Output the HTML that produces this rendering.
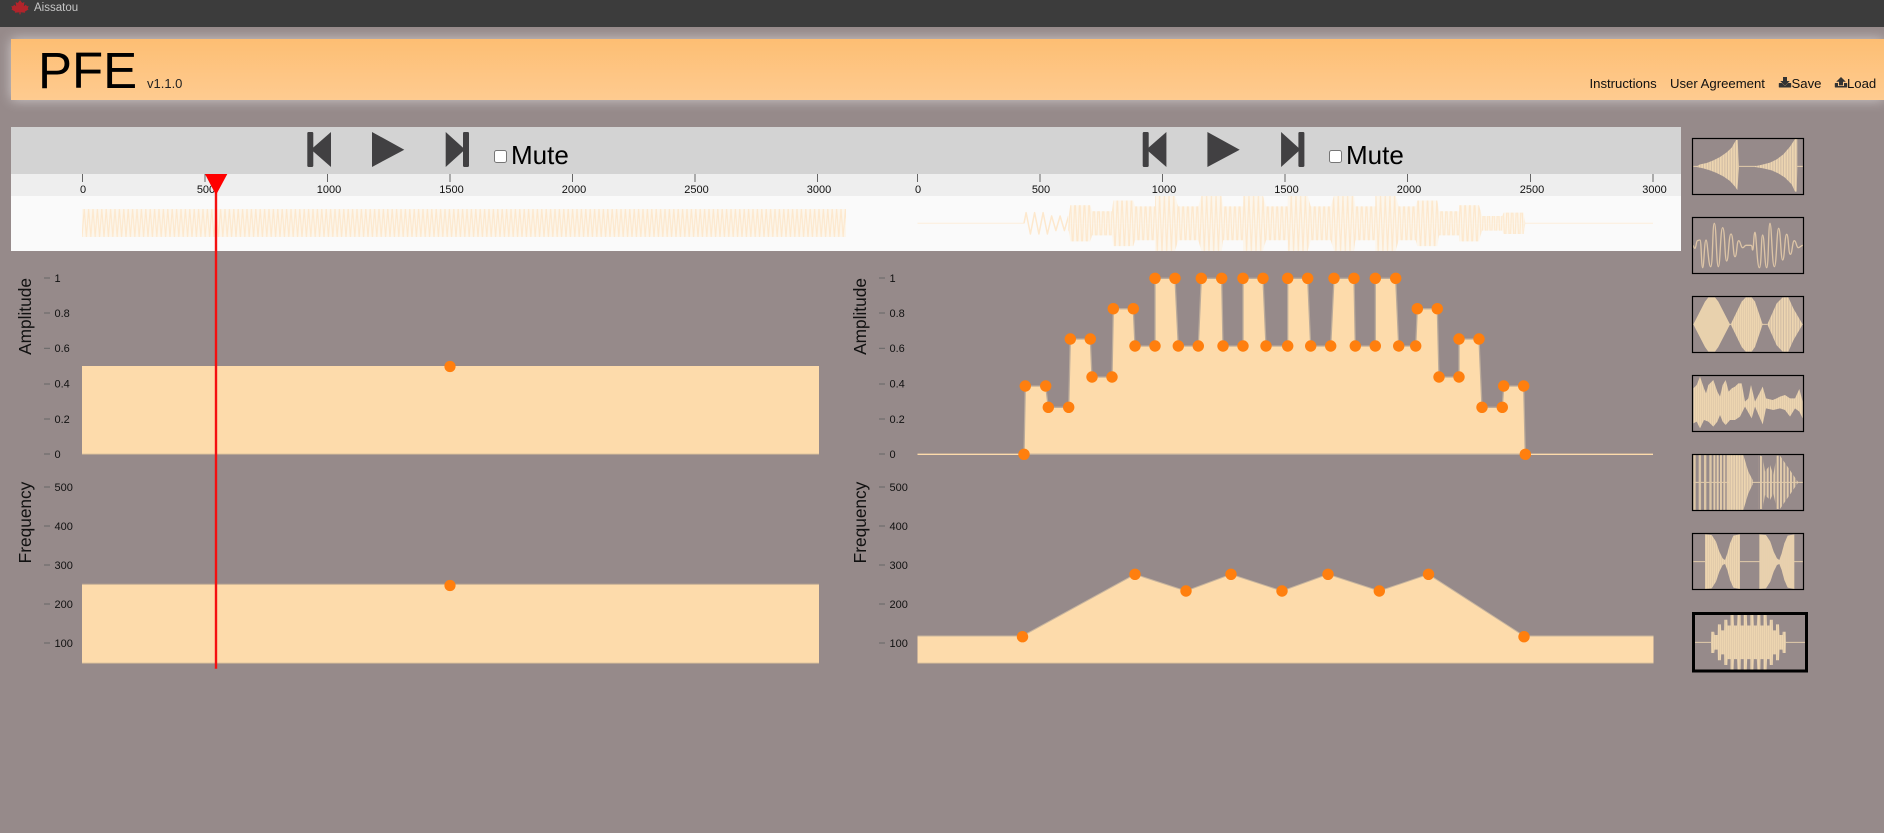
<!DOCTYPE html>
<html lang="en">
<head>
<meta charset="utf-8">
<title>PFE</title>
<style>
html,body{margin:0;padding:0;width:1884px;height:833px;overflow:hidden;background:#968a8a;font-family:"Liberation Sans",Arial,sans-serif;}
#top{position:absolute;left:0;top:0;width:1884px;height:27px;background:#3c3c3c;z-index:3;}
#hdr{position:absolute;left:11px;top:39px;width:1873px;height:61px;background:linear-gradient(#fdbe73,#fecb90);box-shadow:0 0 12px rgba(255,255,255,.55);z-index:1;}
svg.main{position:absolute;left:0;top:0;z-index:4;}
input.cb{position:absolute;margin:0;width:13px;height:13px;top:150px;z-index:5;}
text{font-family:"Liberation Sans",Arial,sans-serif;}
.ax{font-size:11px;fill:#111;}
.ti{stroke:#666;stroke-width:1;}
.yl{font-size:17.3px;fill:#111;text-anchor:middle;}
.nav{font-size:13.15px;fill:#111;}
.wl{stroke:#e2cbaa;stroke-width:3;fill:none;}
</style>
</head>
<body>
<div id="top"></div>
<div id="hdr"></div>
<input class="cb" type="checkbox" style="left:494px">
<input class="cb" type="checkbox" style="left:1329px">
<svg class="main" width="1884" height="833" viewBox="0 0 1884 833" xmlns="http://www.w3.org/2000/svg">
<defs>
<polygon id="ampS" points="1024,454.3 1025.3,386 1045.7,386 1048.3,407.3 1068.7,407.3 1070.3,339 1090.3,339 1092,377 1112,377 1113.3,308.7 1133.3,308.7 1135,346 1155,346 1155,278.3 1175,278.3 1178.3,346 1198.3,346 1201.3,278.3 1221.7,278.3 1223,346 1243,346 1243,278.3 1263,278.3 1266,346 1287.7,346 1287.7,278.3 1307.7,278.3 1310.7,346 1330.7,346 1334,278.3 1354,278.3 1355.3,346 1375.3,346 1375.3,278.3 1395.7,278.3 1398.7,346 1415.7,346 1417.3,308.7 1437.3,308.7 1439,377 1459,377 1459,339 1479,339 1482,407.3 1502.3,407.3 1503.7,386 1523.7,386 1525.3,454.3"/>
<clipPath id="envR">
<use href="#ampS" transform="matrix(1 0 0 .15625 0 152.3)"/>
<use href="#ampS" transform="matrix(1 0 0 -.15625 0 294.3)"/>
</clipPath>
<clipPath id="envT7">
<use href="#ampS" transform="matrix(.4484 0 0 .466 -366.2 620.3)"/>
<use href="#ampS" transform="matrix(.4484 0 0 -.466 -366.2 1043.7)"/>
</clipPath>
<pattern id="wL" patternUnits="userSpaceOnUse" x="82" y="209" width="4.4" height="28"><path d="M0 28L2.2 0L4.4 28" fill="none" stroke="#fde8cd" stroke-width="1.2"/></pattern>
<pattern id="wR2" patternUnits="userSpaceOnUse" x="1068" y="196" width="4.7" height="55"><path d="M0 55L2.35 0L4.7 55" fill="none" stroke="#fde8cd" stroke-width="1.2"/></pattern>
<pattern id="pA" patternUnits="userSpaceOnUse" width="8" height="10"><rect width="8" height="10" fill="#cfbba4"/><rect width="5" height="10" fill="#edd5b0"/></pattern>
<pattern id="pD" patternUnits="userSpaceOnUse" width="6" height="10"><rect width="6" height="10" fill="#dcc6a8"/><rect width="4" height="10" fill="#edd5b0"/></pattern>
<pattern id="pB" patternUnits="userSpaceOnUse" width="10" height="10"><rect width="6" height="10" fill="#e2cbaa"/></pattern>
<pattern id="pC" patternUnits="userSpaceOnUse" x="40" width="16" height="10"><rect width="7" height="10" fill="#dcc6a6"/></pattern>
</defs>

<!-- top bar -->
<path d="M20 0L22.2 3L24.4 2L23.8 6.2L26 4.6L26.8 6.3L28.6 6L27.8 8.6L28.6 9.4L24.8 11.6L25.2 12.8L20.6 12.2V14.4H19.4V12.2L14.8 12.8L15.2 11.6L11.4 9.4L12.2 8.6L11.4 6L13.2 6.3L14 4.6L16.2 6.2L15.6 2L17.8 3Z" fill="#b1242b"/>
<text x="34" y="11" font-size="11.5" fill="#c6c6c6">Aissatou</text>

<!-- header -->
<text x="38" y="88" font-size="51" fill="#000">PFE</text>
<text x="147" y="88" font-size="13" fill="#222">v1.1.0</text>
<text class="nav" x="1589.5" y="88">Instructions</text>
<text class="nav" x="1670" y="88">User Agreement</text>
<text class="nav" x="1791.5" y="88">Save</text>
<text class="nav" x="1847" y="88">Load</text>
<g fill="#333">
<path d="M1783 77h4v4h2.8l-4.8 4.8l-4.8-4.8h2.8z"/>
<path d="M1779.4 83h2.6l3 3l3-3h2.6q.6 0 .6 .6v3.4q0 .5-.6 .5h-11.2q-.6 0-.6-.5v-3.4q0-.6 .6-.6z"/>
<path d="M1841 77l4.8 4.8h-2.8v3.6h-4v-3.6h-2.8z"/>
<path d="M1835.4 83h2.6v3h6v-3h2.6q.6 0 .6 .6v3.4q0 .5-.6 .5h-11.2q-.6 0-.6-.5v-3.4q0-.6 .6-.6z"/>
</g>

<!-- control band -->
<rect x="11" y="127" width="1670" height="47" fill="#d3d3d3"/>
<rect x="11" y="174" width="1670" height="22" fill="#eeeeee"/>
<rect x="11" y="196" width="1670" height="55" fill="#fafafa"/>

<g fill="#414042">
<rect x="307.3" y="132" width="6" height="35" rx="1.2"/>
<polygon points="311,149.5 331,132 331,167"/>
<polygon points="372,132 404.3,149.7 372,167"/>
<polygon points="445.7,132 465,149.5 445.7,167"/>
<rect x="463" y="132" width="6" height="35" rx="1.2"/>
</g>
<g fill="#414042" transform="translate(835.4 0)">
<rect x="307.3" y="132" width="6" height="35" rx="1.2"/>
<polygon points="311,149.5 331,132 331,167"/>
<polygon points="372,132 404.3,149.7 372,167"/>
<polygon points="445.7,132 465,149.5 445.7,167"/>
<rect x="463" y="132" width="6" height="35" rx="1.2"/>
</g>
<text x="511" y="164" font-size="26" fill="#000">Mute</text>
<text x="1346" y="164" font-size="26" fill="#000">Mute</text>

<!-- time axes -->
<g class="ti">
<line x1="82.5" x2="82.5" y1="174" y2="182"/><line x1="205" x2="205" y1="174" y2="182"/><line x1="327.5" x2="327.5" y1="174" y2="182"/><line x1="450" x2="450" y1="174" y2="182"/><line x1="572.5" x2="572.5" y1="174" y2="182"/><line x1="695" x2="695" y1="174" y2="182"/><line x1="817.5" x2="817.5" y1="174" y2="182"/>
<line x1="917.5" x2="917.5" y1="174" y2="182"/><line x1="1040" x2="1040" y1="174" y2="182"/><line x1="1162.5" x2="1162.5" y1="174" y2="182"/><line x1="1285" x2="1285" y1="174" y2="182"/><line x1="1407.5" x2="1407.5" y1="174" y2="182"/><line x1="1530.5" x2="1530.5" y1="174" y2="182"/><line x1="1653" x2="1653" y1="174" y2="182"/>
</g>
<g class="ax" text-anchor="middle">
<text x="83" y="193">0</text><text x="206" y="193">500</text><text x="329" y="193">1000</text><text x="451.5" y="193">1500</text><text x="574" y="193">2000</text><text x="696.5" y="193">2500</text><text x="819" y="193">3000</text>
<text x="918" y="193">0</text><text x="1041" y="193">500</text><text x="1164" y="193">1000</text><text x="1286.5" y="193">1500</text><text x="1409" y="193">2000</text><text x="1532" y="193">2500</text><text x="1654.5" y="193">3000</text>
</g>

<!-- waveforms in band -->
<rect x="82" y="209" width="764" height="28" fill="#fcf6ec"/>
<rect x="82" y="209" width="764" height="28" fill="url(#wL)"/>
<line x1="917.5" x2="1024" y1="223.3" y2="223.3" stroke="#fdeedb" stroke-width="1"/>
<line x1="1525" x2="1653" y1="223.3" y2="223.3" stroke="#fdeedb" stroke-width="1"/>
<polyline points="1024,223.3 1026.1,212.6 1030.4,234 1034.6,212.6 1038.9,234 1043.1,212.6 1047.4,234 1051.6,216 1055.9,230.6 1060.1,216 1064.4,230.6 1068.6,216" fill="none" stroke="#fde8cd" stroke-width="1.5" stroke-linejoin="round"/>
<g clip-path="url(#envR)">
<rect x="1068" y="196" width="458" height="55" fill="#fcf6ec"/>
<rect x="1068" y="196" width="458" height="55" fill="url(#wR2)"/>
</g>

<!-- y axes -->
<g class="ti">
<line x1="44" x2="50" y1="278" y2="278"/><line x1="44" x2="50" y1="313" y2="313"/><line x1="44" x2="50" y1="348.3" y2="348.3"/><line x1="44" x2="50" y1="384" y2="384"/><line x1="44" x2="50" y1="419" y2="419"/><line x1="44" x2="50" y1="454" y2="454"/>
<line x1="44" x2="50" y1="487" y2="487"/><line x1="44" x2="50" y1="526" y2="526"/><line x1="44" x2="50" y1="565" y2="565"/><line x1="44" x2="50" y1="604" y2="604"/><line x1="44" x2="50" y1="643" y2="643"/>
<line x1="879" x2="885" y1="278" y2="278"/><line x1="879" x2="885" y1="313" y2="313"/><line x1="879" x2="885" y1="348.3" y2="348.3"/><line x1="879" x2="885" y1="384" y2="384"/><line x1="879" x2="885" y1="419" y2="419"/><line x1="879" x2="885" y1="454" y2="454"/>
<line x1="879" x2="885" y1="487" y2="487"/><line x1="879" x2="885" y1="526" y2="526"/><line x1="879" x2="885" y1="565" y2="565"/><line x1="879" x2="885" y1="604" y2="604"/><line x1="879" x2="885" y1="643" y2="643"/>
</g>
<g class="ax">
<text x="54.5" y="282">1</text><text x="54.5" y="317">0.8</text><text x="54.5" y="352">0.6</text><text x="54.5" y="387.5">0.4</text><text x="54.5" y="423">0.2</text><text x="54.5" y="458">0</text>
<text x="54.5" y="491">500</text><text x="54.5" y="530">400</text><text x="54.5" y="569">300</text><text x="54.5" y="608">200</text><text x="54.5" y="647">100</text>
<text x="889.5" y="282">1</text><text x="889.5" y="317">0.8</text><text x="889.5" y="352">0.6</text><text x="889.5" y="387.5">0.4</text><text x="889.5" y="423">0.2</text><text x="889.5" y="458">0</text>
<text x="889.5" y="491">500</text><text x="889.5" y="530">400</text><text x="889.5" y="569">300</text><text x="889.5" y="608">200</text><text x="889.5" y="647">100</text>
</g>
<text class="yl" transform="translate(31 316.5) rotate(-90)">Amplitude</text>
<text class="yl" transform="translate(31 522.5) rotate(-90)">Frequency</text>
<text class="yl" transform="translate(866 316.5) rotate(-90)">Amplitude</text>
<text class="yl" transform="translate(866 522.5) rotate(-90)">Frequency</text>

<!-- left charts -->
<rect x="82" y="366" width="737" height="88.3" fill="#fddbab"/>
<line x1="82" x2="819" y1="454.3" y2="454.3" stroke="#c3ae94" stroke-width="1"/>
<circle cx="450" cy="366.5" r="5.6" fill="#ff7f0e"/>
<rect x="82" y="584.3" width="737" height="79" fill="#fddbab"/>
<line x1="82" x2="819" y1="584.3" y2="584.3" stroke="#c3ae94" stroke-width="1"/>
<line x1="82" x2="819" y1="663.3" y2="663.3" stroke="#c3ae94" stroke-width="1"/>
<circle cx="450" cy="585.5" r="5.6" fill="#ff7f0e"/>

<!-- right amplitude -->
<line x1="917.5" x2="1024" y1="454.3" y2="454.3" stroke="#fddbab" stroke-width="1.4"/>
<line x1="1525" x2="1653" y1="454.3" y2="454.3" stroke="#fddbab" stroke-width="1.4"/>
<use href="#ampS" fill="#fddbab" stroke="#bbab9a" stroke-width="1.3"/>
<g fill="#ff7f0e">
<circle cx="1024" cy="454.3" r="5.7"/><circle cx="1025.3" cy="386" r="5.7"/><circle cx="1045.7" cy="386" r="5.7"/><circle cx="1048.3" cy="407.3" r="5.7"/><circle cx="1068.7" cy="407.3" r="5.7"/><circle cx="1070.3" cy="339" r="5.7"/><circle cx="1090.3" cy="339" r="5.7"/><circle cx="1092" cy="377" r="5.7"/><circle cx="1112" cy="377" r="5.7"/><circle cx="1113.3" cy="308.7" r="5.7"/><circle cx="1133.3" cy="308.7" r="5.7"/><circle cx="1135" cy="346" r="5.7"/><circle cx="1155" cy="346" r="5.7"/><circle cx="1155" cy="278.3" r="5.7"/><circle cx="1175" cy="278.3" r="5.7"/><circle cx="1178.3" cy="346" r="5.7"/><circle cx="1198.3" cy="346" r="5.7"/><circle cx="1201.3" cy="278.3" r="5.7"/><circle cx="1221.7" cy="278.3" r="5.7"/><circle cx="1223" cy="346" r="5.7"/><circle cx="1243" cy="346" r="5.7"/><circle cx="1243" cy="278.3" r="5.7"/><circle cx="1263" cy="278.3" r="5.7"/><circle cx="1266" cy="346" r="5.7"/><circle cx="1287.7" cy="346" r="5.7"/><circle cx="1287.7" cy="278.3" r="5.7"/><circle cx="1307.7" cy="278.3" r="5.7"/><circle cx="1310.7" cy="346" r="5.7"/><circle cx="1330.7" cy="346" r="5.7"/><circle cx="1334" cy="278.3" r="5.7"/><circle cx="1354" cy="278.3" r="5.7"/><circle cx="1355.3" cy="346" r="5.7"/><circle cx="1375.3" cy="346" r="5.7"/><circle cx="1375.3" cy="278.3" r="5.7"/><circle cx="1395.7" cy="278.3" r="5.7"/><circle cx="1398.7" cy="346" r="5.7"/><circle cx="1415.7" cy="346" r="5.7"/><circle cx="1417.3" cy="308.7" r="5.7"/><circle cx="1437.3" cy="308.7" r="5.7"/><circle cx="1439" cy="377" r="5.7"/><circle cx="1459" cy="377" r="5.7"/><circle cx="1459" cy="339" r="5.7"/><circle cx="1479" cy="339" r="5.7"/><circle cx="1482" cy="407.3" r="5.7"/><circle cx="1502.3" cy="407.3" r="5.7"/><circle cx="1503.7" cy="386" r="5.7"/><circle cx="1523.7" cy="386" r="5.7"/><circle cx="1525.3" cy="454.3" r="5.7"/>
</g>

<!-- right frequency -->
<polygon points="917.5,636 1022.5,636 1135,574.3 1186,591 1231,574.3 1282,591 1328,574.3 1379.3,591 1428.5,574.3 1524,636 1653.5,636 1653.5,663.3 917.5,663.3" fill="#fddbab"/>
<polyline points="917.5,636 1022.5,636 1135,574.3 1186,591 1231,574.3 1282,591 1328,574.3 1379.3,591 1428.5,574.3 1524,636 1653.5,636" fill="none" stroke="#c8b59e" stroke-width="1"/>
<line x1="917.5" x2="1653.5" y1="663.3" y2="663.3" stroke="#c3ae94" stroke-width="1"/>
<g fill="#ff7f0e">
<circle cx="1022.5" cy="636.7" r="5.7"/><circle cx="1135" cy="574.3" r="5.7"/><circle cx="1186" cy="591" r="5.7"/><circle cx="1231" cy="574.3" r="5.7"/><circle cx="1282" cy="591" r="5.7"/><circle cx="1328" cy="574.3" r="5.7"/><circle cx="1379.3" cy="591" r="5.7"/><circle cx="1428.5" cy="574.3" r="5.7"/><circle cx="1524" cy="636.7" r="5.7"/>
</g>

<!-- thumbnails row 1-3 -->
<g transform="translate(1680 125) scale(.33333)">
<line class="wl" x1="40" x2="370" y1="124" y2="124"/>
<polygon fill="url(#pA)" points="50,124 60,118 80,114 100,106 120,96 140,82 155,68 168,45 173,45 177,124 177,130 172,195 165,185 150,168 130,154 110,144 90,136 70,130 50,126"/>
<polygon fill="url(#pA)" points="225,124 250,118 270,113 290,103 310,88 330,65 345,42 352,42 352,130 350,200 345,200 335,178 315,158 295,145 275,136 250,130 225,126"/>

<path d="M40 361S42 370 45 370S49 347 52 347S56 345 60 345S64 428 68 428S73 345 78 345S85 425 92 425S97 295 103 295S109 425 115 425S121 308 128 308S134 408 140 408S146 327 153 327S159 395 165 395S170 347 176 347S182 368 188 368S193 361 198 361S205 361 212 361S215 375 218 375S221 322 225 322S231 428 238 428S243 330 248 330S254 428 260 428S265 295 270 295S276 425 283 425S290 310 296 310S302 405 308 405S314 328 320 328S325 388 331 388S337 347 343 347S349 368 355 368S362 361 370 361" fill="none" stroke="#dcc4a6" stroke-width="4"/>

<line class="wl" x1="40" x2="370" y1="598" y2="598"/>
<polygon fill="#e8d1ad" points="40,598 75,530 85,517 105,517 115,530 150,598 115,666 105,680 85,680 75,666"/>
<polygon fill="url(#pD)" points="152,598 185,530 197,517 215,517 225,530 248,598 225,666 215,680 197,680 185,666"/>
<polygon fill="url(#pA)" points="262,598 290,535 308,517 325,517 340,550 368,598 340,646 325,680 308,680 290,661"/>
</g>
<rect x="1692.5" y="138.5" width="111" height="56" fill="none" stroke="#000" stroke-width="1.2"/>
<rect x="1692.5" y="217.5" width="111" height="56" fill="none" stroke="#000" stroke-width="1.2"/>
<rect x="1692.5" y="296.5" width="111" height="56" fill="none" stroke="#000" stroke-width="1.2"/>

<!-- thumbnails row 4-7 -->
<g transform="translate(1680 365) scale(.33333)">
<polygon fill="url(#pD)" points="40,70 50,60 60,35 72,70 78,85 85,60 100,45 112,80 120,95 128,60 137,45 146,80 155,70 165,65 175,55 185,55 195,110 205,100 213,60 225,110 238,85 248,65 258,100 278,105 290,100 300,95 315,90 330,100 345,100 358,72 368,110 368,160 358,140 345,130 330,155 315,135 300,130 280,135 258,130 248,178 225,125 215,160 195,125 180,155 165,165 150,165 137,180 128,170 120,150 112,170 100,185 85,170 72,165 60,190 50,170 40,175"/>

<line class="wl" x1="40" x2="370" y1="352" y2="352"/>
<rect x="40" y="270" width="60" height="165" fill="url(#pC)"/>
<rect x="100" y="270" width="45" height="165" fill="url(#pB)"/>
<polygon fill="url(#pA)" points="145,270 190,270 205,320 218,345 218,358 205,385 190,435 145,435"/>
<polygon fill="url(#pB)" points="236,270 248,275 255,320 270,300 280,330 290,272 300,272 355,352 300,432 290,432 280,385 270,405 255,390 248,432 236,432"/>

<line class="wl" x1="40" x2="370" y1="590" y2="590"/>
<polygon fill="url(#pD)" points="75,508 95,510 108,530 118,560 128,580 135,585 142,565 150,535 160,512 180,508 180,672 160,668 150,645 142,615 135,597 128,600 118,620 108,650 95,670 75,672"/>
<polygon fill="url(#pD)" transform="translate(163 0)" points="75,508 95,510 108,530 118,560 128,580 135,585 142,565 150,535 160,512 180,508 180,672 160,668 150,645 142,615 135,597 128,600 118,620 108,650 95,670 75,672"/>

<line class="wl" x1="45" x2="375" y1="832" y2="832"/>
<rect x="90" y="750" width="230" height="164" fill="url(#pD)" clip-path="url(#envT7)"/>
</g>
<rect x="1692.5" y="375.5" width="111" height="56" fill="none" stroke="#000" stroke-width="1.2"/>
<rect x="1692.5" y="454.5" width="111" height="56" fill="none" stroke="#000" stroke-width="1.2"/>
<rect x="1692.5" y="533.5" width="111" height="56" fill="none" stroke="#000" stroke-width="1.2"/>
<rect x="1693.5" y="613.5" width="113" height="57.5" fill="none" stroke="#000" stroke-width="3"/>

<!-- playhead -->
<line x1="216" x2="216" y1="190" y2="668.7" stroke="#f51010" stroke-width="2.4"/>
<polygon points="205,174 227.3,174 216,195" fill="#ff0000"/>
</svg>
</body>
</html>
